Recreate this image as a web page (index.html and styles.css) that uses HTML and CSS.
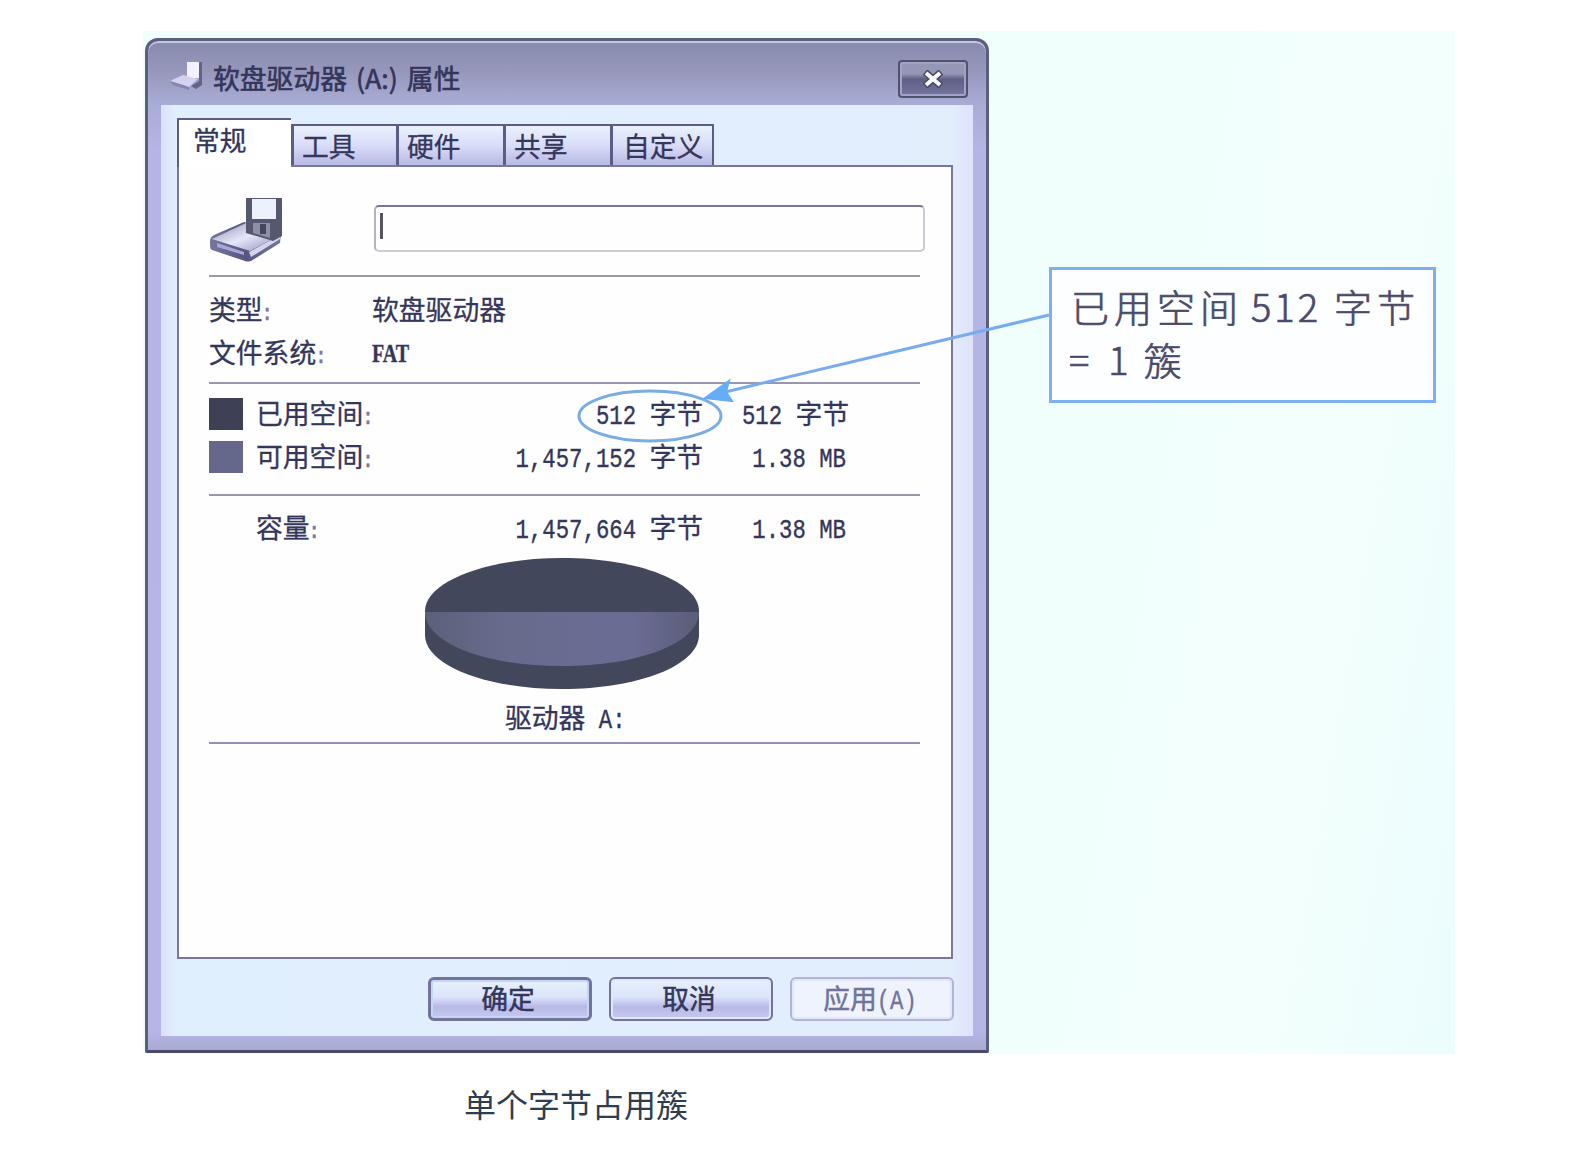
FILE: index.html
```html
<!DOCTYPE html>
<html lang="zh-CN">
<head>
<meta charset="utf-8">
<title>单个字节占用簇</title>
<link rel="stylesheet" href="styles.css">
</head>
<body>
<main class="article">
  <div class="figure">
    <section class="window">
      <header class="titlebar">
        <svg class="title-icon" viewBox="0 0 36 32" width="36" height="32">
          <path d="M18 2h12v16H18z" fill="#f2f1ff"/>
          <path d="M30 2h3v23l-6 4-5-3 8-5z" fill="#62638c"/>
          <path d="M1 21l13-6 15 4-9 8z" fill="#d4d2ec"/>
          <path d="M1 21l19 6v3L4 25z" fill="#8785ac"/>
        </svg>
        <h1 class="title">软盘驱动器 (A:) 属性</h1>
        <button class="close" aria-label="关闭">
          <svg viewBox="0 0 24 18" width="24" height="18"><path d="M4 2l16 14M20 2L4 16" stroke="#4a4a68" stroke-width="7"/><path d="M5 3l14 12M19 3L5 15" stroke="#f8f8ff" stroke-width="4"/></svg>
        </button>
      </header>
      <div class="client">
        <nav class="tabs">
          <span class="tab active">常规</span>
          <span class="tab">工具</span>
          <span class="tab">硬件</span>
          <span class="tab">共享</span>
          <span class="tab last">自定义</span>
        </nav>
        <div class="sheet">
          <div class="head">
            <svg class="drive" viewBox="0 0 76 68" width="76" height="68">
              <defs>
                <linearGradient id="top" x1="0" y1="0" x2="1" y2="1"><stop offset="0" stop-color="#8e90a8"/><stop offset=".5" stop-color="#e6e6fb"/><stop offset="1" stop-color="#8c8cb4"/></linearGradient>
                <linearGradient id="front" x1="0" y1="0" x2="1" y2="0"><stop offset="0" stop-color="#77779f"/><stop offset=".5" stop-color="#55567f"/><stop offset="1" stop-color="#777899"/></linearGradient>
              </defs>
              <path d="M1 44q0-4 4-6L35 25 72 36 71 46 42 64q-3 1-6 0L3 53q-2-1-2-4z" fill="url(#front)"/>
              <path d="M3 42L37 26 71 38 41 54z" fill="url(#top)"/>
              <path d="M40 55l31-17v4L42 60z" fill="#d3d3ea"/>
              <path d="M8 46l27 9v3L8 50z" fill="#a9a7d8"/>
              <path d="M37 1h36v38l-9 5-27-8z" fill="#55596f"/>
              <path d="M43 2h24v20H43z" fill="#edf1fc"/>
              <path d="M44 26h17v15l-17-5z" fill="#8d90a8"/>
              <path d="M51 27h6v10h-6z" fill="#44485e"/>
            </svg>
            <div class="field"><i class="caret"></i></div>
          </div>
          <div class="info">
            <div class="pair"><span>类型<b class="colon">:</b></span><span>软盘驱动器</span></div>
            <div class="pair"><span>文件系统<b class="colon">:</b></span><span class="fat">FAT</span></div>
          </div>
          <div class="usage">
            <div class="row"><i class="swatch used"></i><span>已用空间<b class="colon">:</b></span><span class="num"><em>512 </em>字节</span><span class="num"><em>512 </em>字节</span></div>
            <div class="row"><i class="swatch free"></i><span>可用空间<b class="colon">:</b></span><span class="num"><em>1,457,152 </em>字节</span><span class="num short"><em>1.38 MB</em></span></div>
          </div>
          <div class="capacity">
            <div class="row"><i></i><span>容量<b class="colon">:</b></span><span class="num"><em>1,457,664 </em>字节</span><span class="num short"><em>1.38 MB</em></span></div>
            <svg class="pie" viewBox="0 0 276 133" width="276" height="133">
              <defs><linearGradient id="slice" x1="0" y1="0" x2="1" y2="0"><stop offset="0" stop-color="#5c6079"/><stop offset=".3" stop-color="#696b8d"/><stop offset=".75" stop-color="#6b6c94"/><stop offset="1" stop-color="#5a5d78"/></linearGradient></defs>
              <path d="M1 54C1 25 61 1 138 1s137 24 137 53v24c0 30-60 54-137 54S1 108 1 78z" fill="#43475b"/>
              <path d="M1 55h274c0 31-60 54-137 54S1 86 1 55z" fill="url(#slice)"/>
            </svg>
            <div class="drive-name">驱动器<em> A:</em></div>
          </div>
        </div>
        <footer class="buttons">
          <button class="btn default">确定</button>
          <button class="btn">取消</button>
          <button class="btn disabled">应用<em>(A)</em></button>
        </footer>
      </div>
    </section>
    <aside class="margin">
      <p class="callout"><span class="line">已用空间<em>512</em>字节</span><span class="line second"><em>=</em><em>1</em>簇</span></p>
    </aside>
    <svg class="pointer" viewBox="0 0 1312 1023" width="1312" height="1023">
      <ellipse cx="507" cy="385" rx="71" ry="25" fill="none" stroke="#78ace2" stroke-width="3"/>
      <path d="M906 284L578 362" stroke="#78acec" stroke-width="3"/>
      <path d="M562 367l24-17-3 11 6 9z" fill="#65adf8" stroke="#65adf8" stroke-width="2"/>
    </svg>
  </div>
  <p class="caption">单个字节占用簇</p>
</main>
</body>
</html>
```
FILE: styles.css
```css
* { box-sizing: border-box; }
body {
  margin: 0;
  background: #fff;
  font-family: "Noto Sans CJK SC", sans-serif;
  color: #34365a;
}
em, b, i { font-style: normal; font-weight: inherit; }
.article { padding: 31px 0 0 143px; width: 1570px; height: 1150px; overflow: hidden; }
.figure {
  position: relative;
  display: flex;
  width: 1312px;
  height: 1023px;
  background: linear-gradient(100deg, #f1fffc 70%, #f3fffc 85%, #ecfdfe);
}
.window {
  display: flex;
  flex-direction: column;
  width: 844px;
  height: 1015px;
  margin: 7px 0 0 2px;
  padding: 0 13px 14px;
  border: 3px solid #5b5e7c;
  border-bottom-color: #4b4c6c;
  border-radius: 13px 13px 2px 2px;
  background: linear-gradient(#8689ad 0, #9697bb 30px, #a9add6 64px, #b4b5e4 110px, #b5b6e6 990px, #aaa9d2);
  box-shadow: inset 0 2px 1px #c5c8e6;
}
.titlebar { display: flex; align-items: center; height: 64px; padding: 10px 5px 0 8px; }
.title-icon { margin-top: -4px; }
.title {
  margin: 0 0 0 8px;
  font-size: 26.8px;
  font-weight: 400;
  line-height: 40px;
  word-spacing: 3px;
  color: #33365a;
  -webkit-text-stroke: .6px #33365a;
}
.close {
  display: grid;
  place-items: center;
  width: 70px;
  height: 38px;
  margin: 2px 0 0 auto;
  padding: 0;
  border: 2px solid #50526f;
  border-radius: 4px;
  background: linear-gradient(#9697b7 0 35%, #5f6084 50%, #7576a0);
  box-shadow: inset 0 0 0 2px #a3a3c6;
}
.client {
  flex: 1;
  padding: 13px 20px 0 16px;
  background: linear-gradient(90deg, #dcdffb, #e0effd 15px, #e3eefd 97%, #dfe2fb);
}
.tabs { display: flex; align-items: flex-end; height: 47px; }
.tab {
  width: 107px;
  height: 41px;
  padding-left: 8px;
  border: solid #5c5d85;
  border-width: 2px 0 0 3px;
  background: linear-gradient(#e9f2fd, #d9dcf8 50%, #b7b9e4);
  font-size: 26.8px;
  line-height: 39px;
  -webkit-text-stroke: .3px #34365a;
}
.tab.active {
  position: relative;
  width: 114px;
  height: 49px;
  margin-bottom: -2px;
  padding-left: 14px;
  border-width: 2px 0 0 2px;
  background: #fff;
  line-height: 40px;
}
.tab:nth-child(2) { width: 105px; }
.tab.last { width: 104px; padding-left: 10px; border-right-width: 2px; }
.sheet {
  height: 794px;
  padding: 0 31px 0 30px;
  border: 2px solid #7a769f;
  background: #fefefe;
}
.head { display: flex; height: 110px; padding-top: 30px; border-bottom: 2px solid #9b9aaa; }
.field {
  width: 551px;
  height: 47px;
  margin: 8px -5px 0 89px;
  flex: none;
  padding: 6px 4px;
  border: 2px solid #cbcbd3;
  border-top-color: #77779a;
  border-left-color: #b3b3c2;
  border-radius: 5px;
}
.caret { display: block; width: 3px; height: 26px; background: #55555f; }
.info { height: 107px; padding-top: 10px; border-bottom: 2px solid #9997ae; }
.pair, .row {
  display: grid;
  align-items: center;
  height: 43px;
  font-size: 26.8px;
  line-height: 43px;
  white-space: pre;
  -webkit-text-stroke: .3px;
}
.pair { grid-template-columns: 163px 1fr; }
.colon { font: 22.3px "Liberation Mono", monospace; color: #7b7a99; margin-left: -2px; }
.fat { font: bold 20px/43px "Liberation Serif", serif; transform: translateY(2px) scaleY(1.25); }
.usage { height: 112px; padding-top: 7px; border-bottom: 2px solid #9997a8; }
.row { grid-template-columns: 47px 200px 247px 146px; }
.swatch { width: 34px; height: 32px; margin-top: 3px; }
.used { background: #3e4156; }
.free { background: #65678b; }
.num { text-align: right; }
.num em, .drive-name em, .btn em {
  display: inline-block;
  font: 22.3px "Liberation Mono", monospace;
  transform: scaleY(1.2);
  transform-origin: 50% 70%;
  -webkit-text-stroke: .3px;
}
.num.short { padding-right: 3px; }
.capacity { height: 248px; padding-top: 9px; border-bottom: 2px solid #9390b6; }
.pie { display: block; margin: 9px 0 0 215px; }
.drive-name { margin-top: 7px; padding-left: 296px; font-size: 26.8px; line-height: 40px; white-space: pre; -webkit-text-stroke: .3px; }
.buttons { display: flex; justify-content: flex-end; gap: 17px; margin: 18px -1px 0 0; }
.btn {
  width: 164px;
  height: 44px;
  padding: 0 4px 3px 0;
  border: 2px solid #73749b;
  border-radius: 6px;
  background: linear-gradient(#e9f1fd, #dbe4fa 45%, #b9b9e8 70%, #c7c9f0);
  box-shadow: inset 0 0 0 2px #e1e6fb;
  color: #34365a;
  font: 26.8px/36px "Noto Sans CJK SC", sans-serif;
  -webkit-text-stroke: .5px;
}
.btn.default { border-width: 3px; box-shadow: inset 0 0 0 2px #c3d6f4; }
.btn.disabled { border-color: #b4b4d4; background: #eef3fe; color: #72739b; }
.margin { flex: 1; padding: 236px 0 0 60px; }
.callout {
  width: 387px;
  height: 136px;
  margin: 0;
  padding: 9px 0 0 19px;
  border: 3px solid #7eaff0;
  background: #fdfeff;
  font-size: 38px;
  font-weight: 300;
  color: #4b4a68;
  -webkit-text-stroke: .7px;
}
.line { display: block; height: 53px; line-height: 53px; letter-spacing: 5px; white-space: nowrap; }
.line em { margin: 0 13px 0 8px; letter-spacing: 3px; }
.second em:first-child { margin: 0 16px 0 -2px; }
.second em + em { margin: 0 12px 0 0; }
.pointer { position: absolute; left: 0; top: 0; }
.caption { width: 866px; margin: 25px 0 0; font-size: 32px; line-height: 48px; text-align: center; color: #2c3e50; }
```
